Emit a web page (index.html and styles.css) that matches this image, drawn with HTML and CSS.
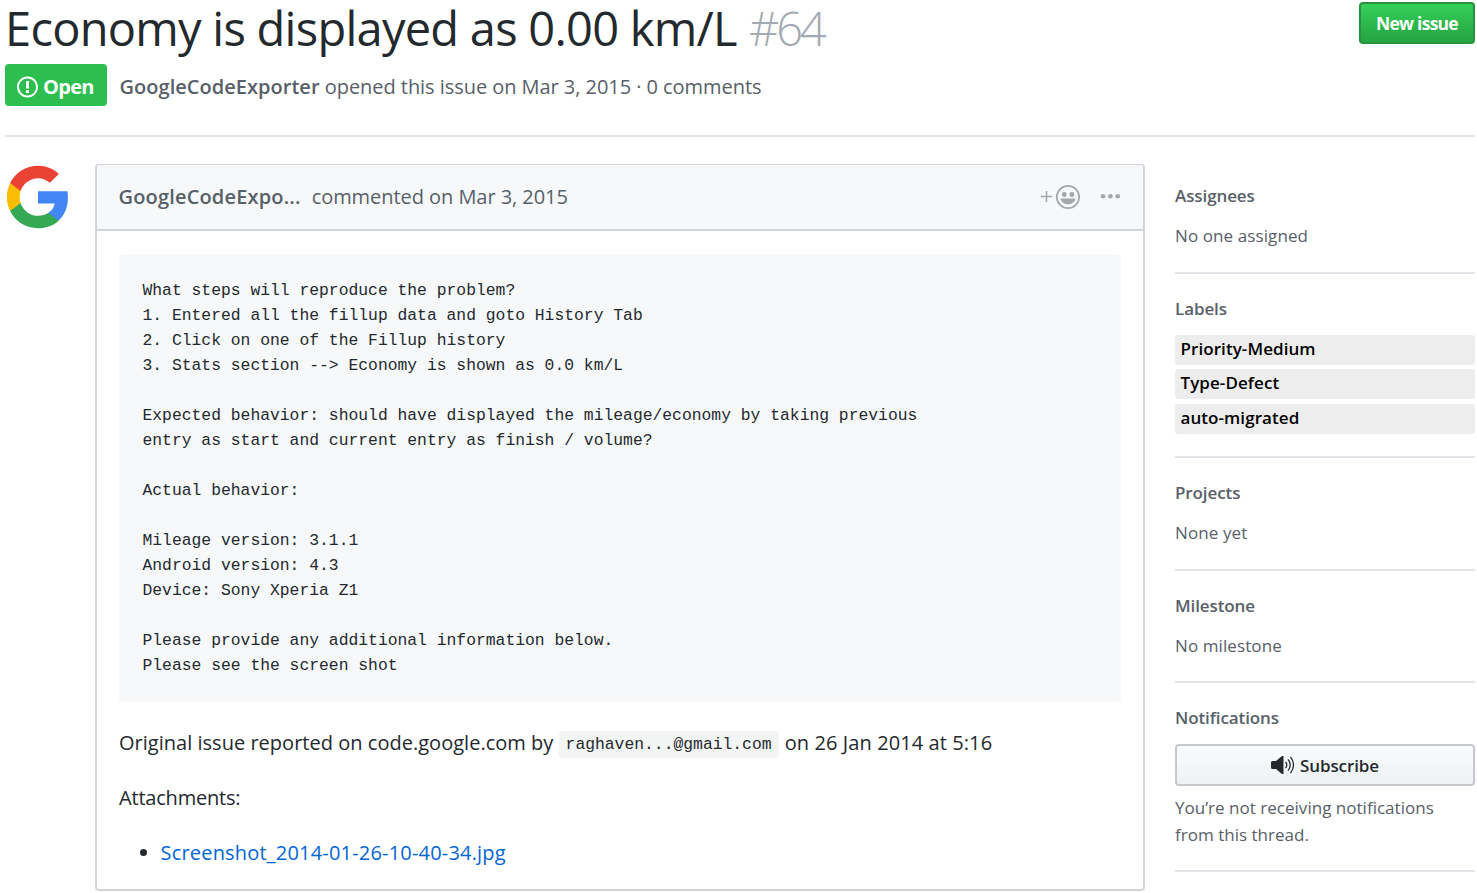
FILE: index.html
```html
<!DOCTYPE html>
<html lang="en">
<head>
<meta charset="utf-8">
<title>Economy is displayed as 0.00 km/L · Issue #64</title>
<link rel="stylesheet" href="styles.css">
</head>
<body>
<header class="issue-header">
  <div class="title-row">
    <h1 class="title"><span class="title-text">Economy is displayed as 0.00 km/L</span> <span class="number">#64</span></h1>
    <a class="btn-primary"><span>New issue</span></a>
  </div>
  <div class="meta-row">
    <span class="state"><svg class="state-icon" viewBox="0 0 14 16" width="21" height="24" fill="currentColor"><path fill-rule="evenodd" d="M7 2.3c3.14 0 5.7 2.56 5.7 5.7s-2.56 5.7-5.7 5.7A5.71 5.71 0 0 1 1.3 8c0-3.14 2.56-5.7 5.7-5.7zM7 1C3.14 1 0 4.14 0 8s3.14 7 7 7 7-3.14 7-7-3.14-7-7-7zm1 3H6v5h2V4zm0 6H6v2h2v-2z"/></svg><span>Open</span></span>
    <div class="meta"><strong class="author">GoogleCodeExporter</strong> <span class="meta-text">opened this issue on Mar 3, 2015 · 0 comments</span></div>
  </div>
</header>
<div class="columns">
  <div class="avatar"><svg viewBox="0 0 48 48" width="68" height="68"><path fill="#4285F4" d="M45.1 24.5c0-1.6-.1-3.100-.4-4.500H24v8.500h11.800c-.5 2.800-2 5.100-4.400 6.700v5.500h7.100c4.200-3.800 6.600-9.500 6.600-16.200z"/><path fill="#34A853" d="M24 46c6 0 11-2 14.500-5.300l-7.100-5.500c-2 1.300-4.500 2.100-7.400 2.100-5.700 0-10.600-3.900-12.300-9.100H4.300v5.700C7.900 41.100 15.400 46 24 46z"/><path fill="#FBBC05" d="M11.700 28.200c-.4-1.300-.7-2.700-.7-4.200s.3-2.900.7-4.200v-5.700H4.300C2.900 17.100 2 20.500 2 24s.9 6.900 2.300 9.900z"/><path fill="#EA4335" d="M24 10.700c3.200 0 6.100 1.100 8.400 3.300l6.300-6.300C34.900 4.200 30 2 24 2 15.400 2 7.900 6.900 4.300 14.100l7.400 5.700C13.400 14.600 18.300 10.700 24 10.700z"/></svg></div>
  <article class="comment">
    <div class="comment-header">
      <strong class="comment-author">GoogleCodeExpo...</strong>
      <span class="comment-date">commented on Mar 3, 2015</span>
      <span class="actions">
        <svg class="react" viewBox="0 0 40 26" width="40" height="26"><path d="M1 12.500h11M6.500 7v11" stroke="#a3a8ad" stroke-width="1.500"/><circle cx="28" cy="13" r="11.200" fill="none" stroke="#a3a8ad" stroke-width="1.700"/><rect x="22" y="8" width="4.600" height="5" rx="2" fill="#a3a8ad"/><rect x="29.500" y="8" width="4.600" height="5" rx="2" fill="#a3a8ad"/><path d="M20.500 14.500h15c-.8 3.500-3.800 5.800-7.500 5.800s-6.700-2.300-7.500-5.800z" fill="#a3a8ad"/></svg>
        <svg class="more" viewBox="0 0 20 6" width="20" height="6" fill="#a3a8ad"><circle cx="3.100" cy="2.300" r="2.300"/><circle cx="10.400" cy="2.300" r="2.300"/><circle cx="17.700" cy="2.300" r="2.300"/></svg>
      </span>
    </div>
    <div class="comment-body">
<pre class="report">What steps will reproduce the problem?
1. Entered all the fillup data and goto History Tab
2. Click on one of the Fillup history
3. Stats section --&gt; Economy is shown as 0.0 km/L

Expected behavior: should have displayed the mileage/economy by taking previous
entry as start and current entry as finish / volume?

Actual behavior:

Mileage version: 3.1.1
Android version: 4.3
Device: Sony Xperia Z1

Please provide any additional information below.
Please see the screen shot
</pre>
      <p class="origin"><span class="origin-text">Original issue reported on code.google.com by</span> <code class="email">raghaven...@gmail.com</code> <span class="origin-date">on 26 Jan 2014 at 5:16</span></p>
      <p class="attachments">Attachments:</p>
      <ul class="files"><li><a class="file">Screenshot_2014-01-26-10-40-34.jpg</a></li></ul>
    </div>
  </article>
  <aside class="sidebar">
    <section class="side-item">
      <h2 class="side-title">Assignees</h2>
      <p class="side-text">No one assigned</p>
    </section>
    <section class="side-item">
      <h2 class="side-title">Labels</h2>
      <div class="labels"><a class="label">Priority-Medium</a><a class="label">Type-Defect</a><a class="label">auto-migrated</a></div>
    </section>
    <section class="side-item">
      <h2 class="side-title">Projects</h2>
      <p class="side-text">None yet</p>
    </section>
    <section class="side-item">
      <h2 class="side-title">Milestone</h2>
      <p class="side-text">No milestone</p>
    </section>
    <section class="side-item">
      <h2 class="side-title">Notifications</h2>
      <button class="subscribe"><svg viewBox="0 0 24 18" width="24" height="18"><path d="M1.500 5H5l6-5h1.500v18H11l-6-5H1.500Q0 13 0 11.500v-5Q0 5 1.500 5z" fill="#24292e"/><path d="M14.500 5.800q2.600 3.200 0 6.400M17 3.300q4.300 5.700 0 11.400M19.500 .8q6 8.200 0 16.400" fill="none" stroke="#24292e" stroke-width="1.300"/></svg><span>Subscribe</span></button>
      <p class="note">You’re not receiving notifications<br>from this thread.</p>
    </section>
  </aside>
</div>
</body>
</html>
```
FILE: styles.css
```css
* { box-sizing: border-box; }
body {
  margin: 0;
  width: 1477px;
  height: 893px;
  overflow: hidden;
  background: #fff;
  color: #24292e;
  font-family: "Open Sans", "Noto Sans", sans-serif;
  font-size: 20px;
}
h1, h2, p, ul, pre { margin: 0; padding: 0; }
strong, h2 { font-weight: 600; }

.issue-header {
  margin: 0 2px 0 5px;
  height: 137px;
  border-bottom: 2px solid #e1e4e8;
}
.title-row {
  display: flex;
  justify-content: space-between;
  align-items: flex-start;
  height: 64px;
}
.title {
  font-size: 47px;
  font-weight: 400;
  line-height: 56px;
  white-space: nowrap;
}
.title-text { letter-spacing: -.74px; }
.number { font-weight: 300; color: #a3aab1; letter-spacing: -3.2px; }
.btn-primary {
  display: flex;
  align-items: center;
  justify-content: center;
  width: 116px;
  height: 42px;
  margin-top: 2px;
  border: 2px solid #28923f;
  border-radius: 4px;
  background: linear-gradient(#34d058, #28a745 90%);
  color: #fff;
  font-size: 17.5px;
  font-weight: 700;
  letter-spacing: -.75px;
}
.meta-row { display: flex; align-items: center; height: 42px; }
.state {
  display: flex;
  align-items: center;
  gap: 5px;
  width: 102px;
  height: 42px;
  padding: 2px 0 0 12px;
  border-radius: 4px;
  background: #2cbe4e;
  color: #fff;
  font-weight: 700;
  letter-spacing: -.7px;
}
.state-icon { margin-top: 1px; }
.meta { margin-left: 12.500px; padding-top: 2px; color: #586069; white-space: nowrap; }
.author { letter-spacing: .03px; }
.meta-text, .comment-date { letter-spacing: -.05px; }

.columns {
  display: grid;
  grid-template-columns: 90px 1050px 300px;
  padding-left: 5px;
}
.avatar { margin: 26px 0 0 -1px; height: 68px; }
.comment {
  height: 727px;
  margin-top: 27px;
  border: 2px solid #d1d5da;
  border-top-width: 1px;
  border-radius: 4px;
}
.comment-header {
  display: flex;
  align-items: center;
  height: 66px;
  padding: 0 23px 0 21.500px;
  border-bottom: 2px solid #d1d5da;
  border-radius: 3px 3px 0 0;
  background: #f6f8fa;
  color: #586069;
}
.comment-author, .comment-date { padding-bottom: 2px; }
.comment-author { letter-spacing: .17px; }
.comment-date { margin-left: 11px; }
.actions { display: flex; align-items: center; gap: 20px; margin-left: auto; }
.comment-body { padding: 23px 22px 0; }
.report {
  height: 448px;
  padding: 24px 23.500px;
  border-radius: 4px;
  background: #f6f8fa;
  font-family: "Liberation Mono", monospace;
  font-size: 16.35px;
  line-height: 25px;
}
.origin, .attachments, .files { line-height: 32px; white-space: nowrap; }
.origin { margin-top: 25px; }
.origin-text { letter-spacing: .02px; }
.origin-date { margin-left: 1px; letter-spacing: .09px; }
.email {
  display: inline-block;
  height: 27px;
  padding: 0 7px;
  border-radius: 4px;
  background: #f3f4f4;
  font-family: "Liberation Mono", monospace;
  font-size: 16.35px;
  line-height: 27px;
  vertical-align: 1px;
}
.attachments { margin-top: 23px; letter-spacing: -.2px; }
.files { margin-top: 23px; padding-left: 41.500px; }
.file { color: #0366d6; letter-spacing: .19px; }

.sidebar { margin: 27px 0 0 30px; width: 300px; font-size: 17px; }
.side-item { border-bottom: 2px solid #e1e4e8; padding: 18px 0 22.500px; }
.side-item + .side-item { padding-top: 21px; }
.side-item:last-child { padding-bottom: 21.500px; }
.side-title {
  font-size: 17px;
  line-height: 27px;
  margin-bottom: 13px;
  color: #586069;
  letter-spacing: -.1px;
}
.side-text { line-height: 27px; color: #586069; letter-spacing: .1px; }
.labels { display: grid; gap: 4.500px; }
.label {
  height: 30px;
  padding-left: 5.500px;
  border-radius: 3px;
  background: #ededed;
  color: #000;
  font-weight: 600;
  line-height: 28px;
  letter-spacing: .07px;
}
.subscribe {
  display: flex;
  align-items: center;
  justify-content: center;
  gap: 5px;
  width: 300px;
  height: 42px;
  border: 2px solid #c5c9cd;
  border-radius: 4px;
  background: linear-gradient(#fafbfc, #eff3f6 90%);
  color: #24292e;
  font: 600 17px "Open Sans", sans-serif;
  letter-spacing: -.1px;
}
.note { margin-top: 8px; line-height: 27px; color: #586069; letter-spacing: .02px; white-space: nowrap; }
```
